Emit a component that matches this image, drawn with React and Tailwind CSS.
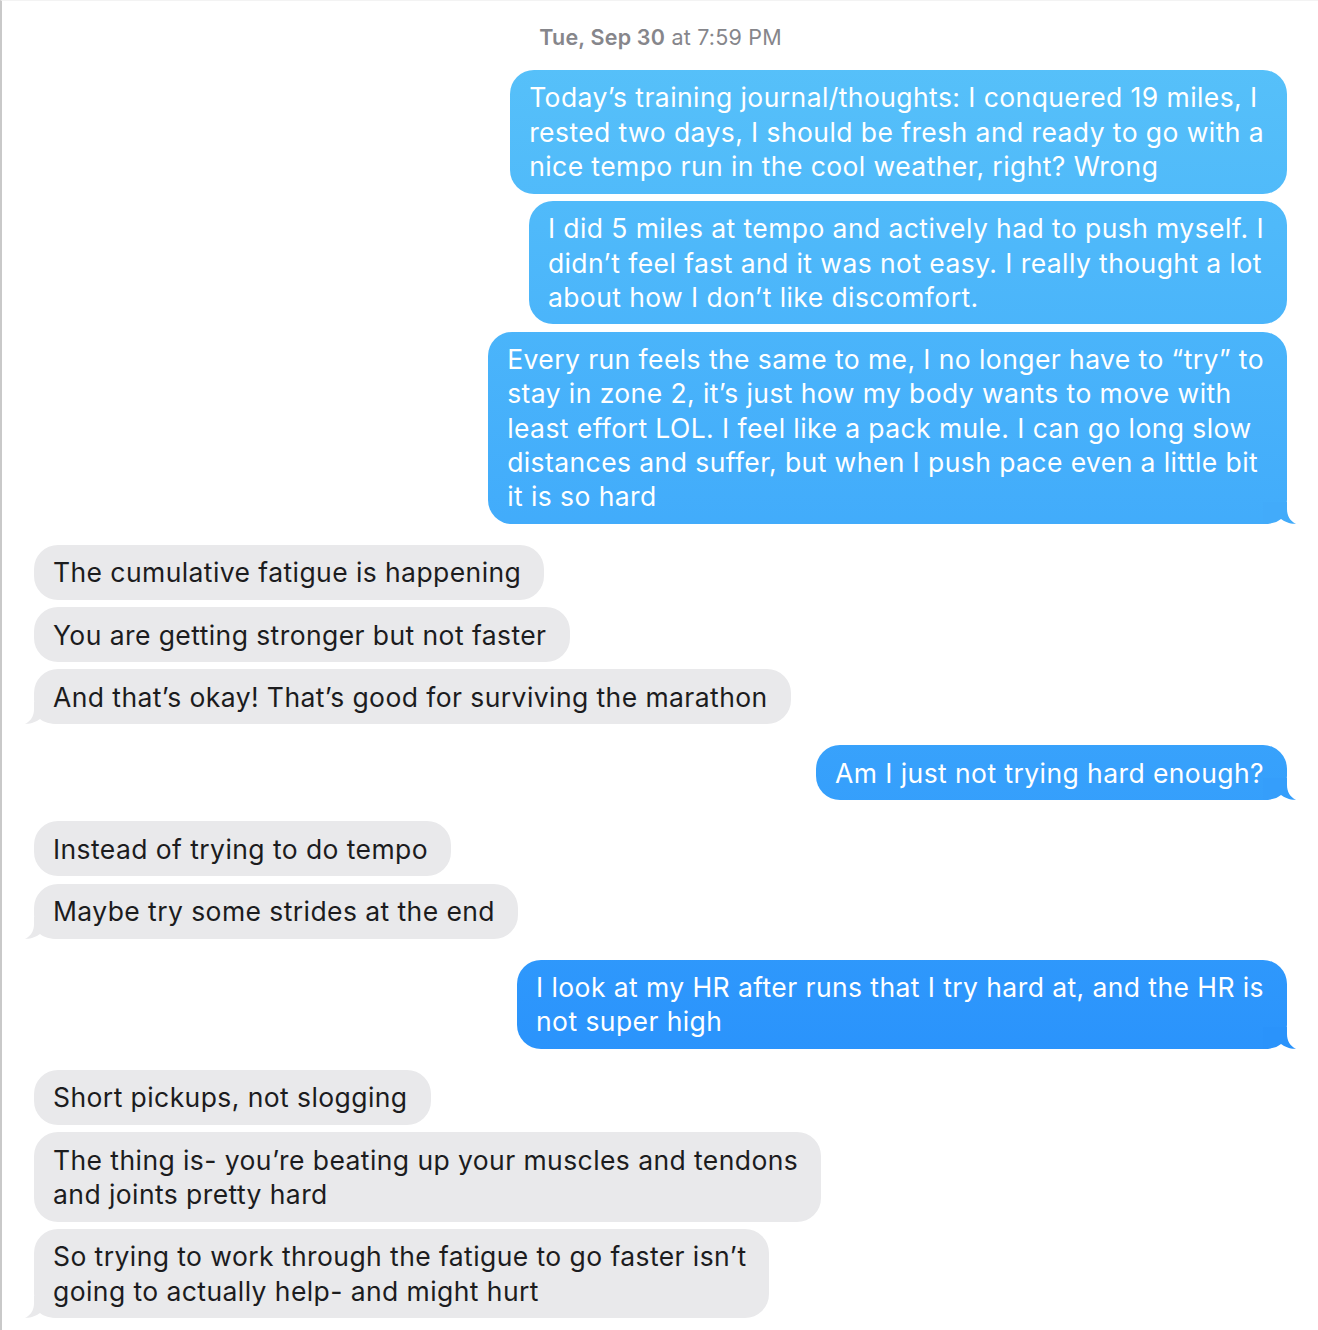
import React from 'react';

const groups = [
  {
    from: 'me',
    messages: [
      ['Today’s training journal/thoughts: I conquered 19 miles, I', 'rested two days, I should be fresh and ready to go with a', 'nice tempo run in the cool weather, right? Wrong'],
      ['I did 5 miles at tempo and actively had to push myself. I', 'didn’t feel fast and it was not easy. I really thought a lot', 'about how I don’t like discomfort.'],
      [
        'Every run feels the same to me, I no longer have to “try” to',
        'stay in zone 2, it’s just how my body wants to move with',
        'least effort LOL. I feel like a pack mule. I can go long slow',
        'distances and suffer, but when I push pace even a little bit',
        'it is so hard',
      ],
    ],
    tail: '#42abfa',
  },
  {
    from: 'them',
    messages: [
      ['The cumulative fatigue is happening'],
      ['You are getting stronger but not faster'],
      ['And that’s okay! That’s good for surviving the marathon'],
    ],
  },
  { from: 'me', messages: [['Am I just not trying hard enough?']], tail: '#359efb' },
  {
    from: 'them',
    messages: [['Instead of trying to do tempo'], ['Maybe try some strides at the end']],
  },
  {
    from: 'me',
    messages: [['I look at my HR after runs that I try hard at, and the HR is', 'not super high']],
    tail: '#2a93fb',
  },
  {
    from: 'them',
    messages: [
      ['Short pickups, not slogging'],
      ['The thing is- you’re beating up your muscles and tendons', 'and joints pretty hard'],
      ['So trying to work through the fatigue to go faster isn’t', 'going to actually help- and might hurt'],
    ],
  },
];

// iMessage style tail, drawn for the right side and mirrored for the left
const Tail = ({ side, color }) => (
  <svg
    width="34"
    height="22"
    viewBox="0 0 34 22"
    className={`absolute bottom-0 ${side === 'me' ? 'right-[-10px]' : 'left-[-10px] -scale-x-100'}`}
  >
    <path
      d="M24 0 L24 7 C24 14 27 19 33 21.8 C28 22.3 21 19.5 18 17 C14 20.5 8 22 0 22 L0 0 Z"
      fill={color}
    />
  </svg>
);

const Bubble = ({ side, lines, tail }) => {
  const mine = side === 'me';
  return (
    <div className={`flex ${mine ? 'justify-end' : 'justify-start'}`}>
      <div
        className={`relative rounded-[24px] pl-[19px] pr-[23px] py-[10.35px] text-[26.5px] tracking-[0.42px] leading-[34.3px] whitespace-nowrap ${
          mine
            ? 'bg-fixed bg-linear-to-b from-[#59c3f9] to-[#1e86fc] text-white'
            : 'bg-[#e9e9eb] text-[#1c1c1e]'
        }`}
      >
        {tail && <Tail side={side} color={tail} />}
        <span className="relative">
          {lines.map((line, i) => (
            <React.Fragment key={i}>
              {i > 0 && <br />}
              {line}
            </React.Fragment>
          ))}
        </span>
      </div>
    </div>
  );
};

export default function App() {
  return (
    <div className="min-h-screen bg-white border-l-2 border-l-[#c9c9c9] border-t border-t-[#f3f3f3] font-['Inter','Noto_Sans',sans-serif] overflow-hidden">
      <div className="pl-[32px] pr-[31px] pt-[21px]">
        <div className="text-center text-[21.5px] tracking-[0.2px] leading-[30px] text-[#86868b]">
          <span className="font-semibold">Tue, Sep 30</span> at 7:59 PM
        </div>
        <div className="mt-[18px] flex flex-col gap-[21px]">
          {groups.map((g, gi) => (
            <div key={gi} className="flex flex-col gap-[7.3px]">
              {g.messages.map((lines, mi) => {
                const last = mi === g.messages.length - 1;
                return (
                  <Bubble
                    key={mi}
                    side={g.from}
                    lines={lines}
                    tail={last ? (g.from === 'me' ? g.tail : '#e9e9eb') : null}
                  />
                );
              })}
            </div>
          ))}
        </div>
      </div>
    </div>
  );
}
